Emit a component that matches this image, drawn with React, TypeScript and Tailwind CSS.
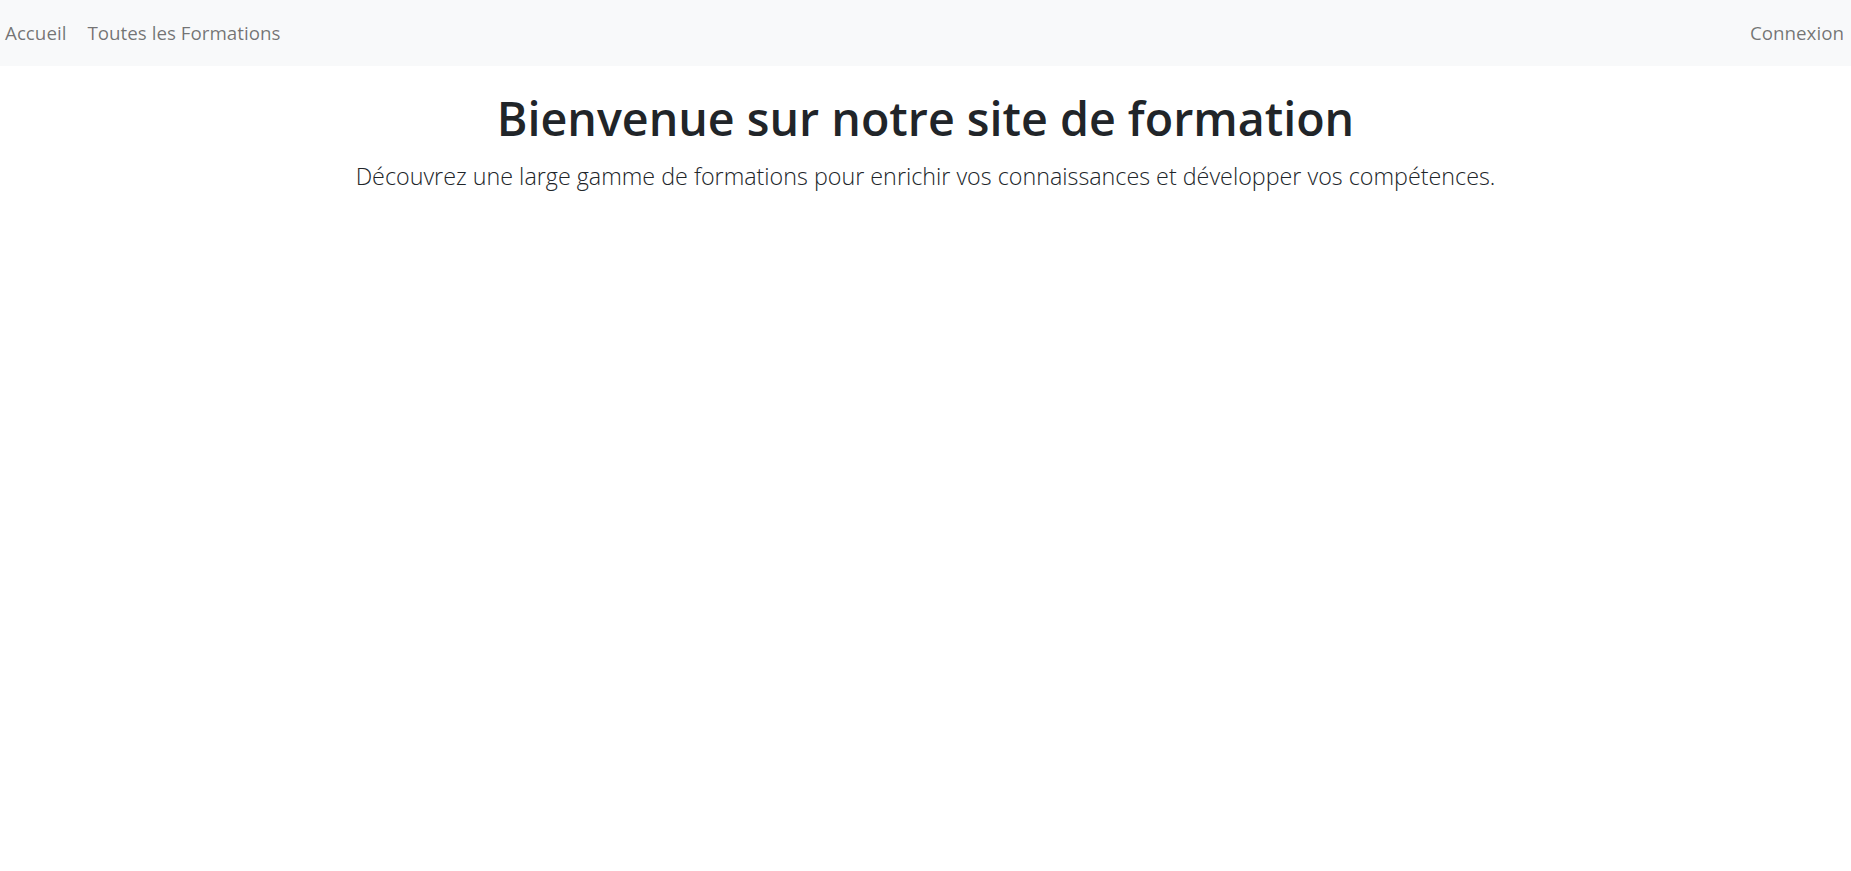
import React from 'react';

const links = ['Accueil', 'Toutes les Formations'];

const App: React.FC = () => {
  return (
    <div className="min-h-screen bg-white font-['Open_Sans',sans-serif] text-[#212529]">
      <nav className="flex h-[66px] items-center justify-between bg-[#f8f9fa] px-[5px]">
        <div className="flex items-center gap-[21px]">
          {links.map((l) => (
            <a key={l} href="#" className="text-[18.8px] text-black/55">
              {l}
            </a>
          ))}
        </div>
        <a href="#" className="pr-[2px] text-[18.8px] text-black/55">
          Connexion
        </a>
      </nav>
      <main className="pt-[25px] text-center">
        <h1 className="text-[46.6px] font-semibold leading-[1.2]">Bienvenue sur notre site de formation</h1>
        <p className="mt-[12px] text-[23.3px] font-light leading-[1.5]">
          Découvrez une large gamme de formations pour enrichir vos connaissances et développer vos compétences.
        </p>
      </main>
    </div>
  );
};

export default App;
